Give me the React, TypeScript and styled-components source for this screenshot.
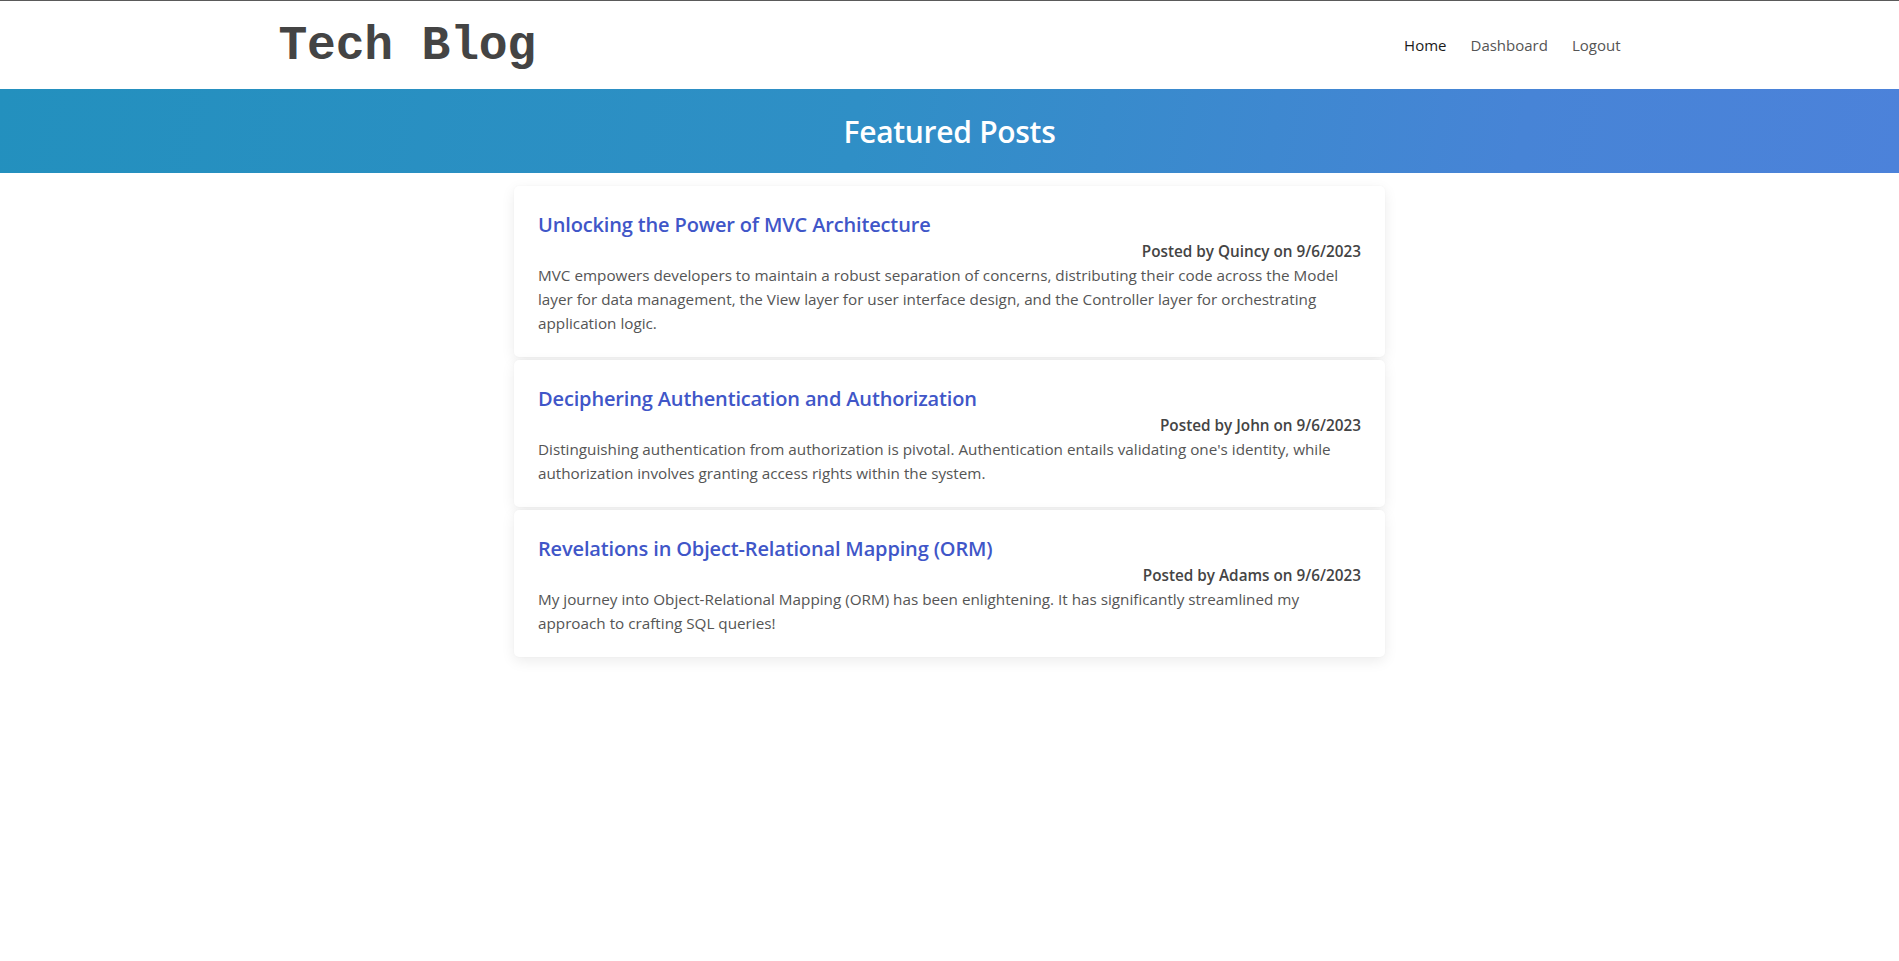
import React from "react";
import styled, { createGlobalStyle } from "styled-components";

const GlobalStyle = createGlobalStyle`
  html, body {
    margin: 0;
    padding: 0;
    background: #ffffff;
  }
  body {
    font-family: "Open Sans", "Noto Sans", Arial, sans-serif;
    color: #555555;
  }
  * { box-sizing: border-box; }
`;

const Page = styled.div`
  min-height: 961px;
  border-top: 1px solid #5a5a5a;
  background: #ffffff;
`;

const Header = styled.header`
  height: 88px;
  display: flex;
  align-items: center;
`;

const HeaderInner = styled.div`
  width: 100%;
  max-width: 1342px;
  margin: 0 auto;
  display: flex;
  align-items: center;
  justify-content: space-between;
`;

const Logo = styled.h1`
  margin: 0;
  font-family: "Liberation Mono", "Courier New", monospace;
  font-size: 48px;
  font-weight: 700;
  color: #444444;
  line-height: 1;
  letter-spacing: -0.2px;
  padding-top: 2px;
`;

const Nav = styled.nav`
  display: flex;
  align-items: center;
  gap: 24px;
`;

const NavLink = styled.a<{ $active?: boolean }>`
  font-size: 15px;
  letter-spacing: 0;
  color: ${(p) => (p.$active ? "#1a1a1a" : "#555555")};
  text-decoration: none;
  cursor: pointer;
`;

const Banner = styled.section`
  height: 84px;
  display: flex;
  align-items: center;
  justify-content: center;
  background: linear-gradient(100deg, #2390be 0%, #2f8fc6 45%, #4784d6 80%, #4c82da 100%);
`;

const BannerTitle = styled.h2`
  margin: 0;
  font-size: 30px;
  font-weight: 600;
  color: #ffffff;
  letter-spacing: -0.3px;
  padding-top: 1px;
`;

const Main = styled.main`
  width: 871px;
  margin: 13px auto 0;
  display: flex;
  flex-direction: column;
  gap: 3px;
`;

const Card = styled.article`
  background: #ffffff;
  border-radius: 5px;
  box-shadow: 0 4px 14px rgba(0, 0, 0, 0.08), 0 0 2px rgba(0, 0, 0, 0.04);
  padding: 27px 24px 22px;
`;

const CardTitle = styled.h3`
  margin: 0 0 2px;
  font-size: 20px;
  line-height: 24px;
  font-weight: 600;
  color: #4056c8;
  letter-spacing: -0.15px;
`;

const Meta = styled.div`
  text-align: right;
  font-size: 15.3px;
  line-height: 24px;
  font-weight: 600;
  color: #444444;
`;

const Body = styled.p`
  margin: 0;
  font-size: 15.25px;
  line-height: 24px;
  color: #555555;
`;

const posts = [
  {
    title: "Unlocking the Power of MVC Architecture",
    author: "Quincy",
    date: "9/6/2023",
    body:
      "MVC empowers developers to maintain a robust separation of concerns, distributing their code across the Model layer for data management, the View layer for user interface design, and the Controller layer for orchestrating application logic.",
  },
  {
    title: "Deciphering Authentication and Authorization",
    author: "John",
    date: "9/6/2023",
    body:
      "Distinguishing authentication from authorization is pivotal. Authentication entails validating one's identity, while authorization involves granting access rights within the system.",
  },
  {
    title: "Revelations in Object-Relational Mapping (ORM)",
    author: "Adams",
    date: "9/6/2023",
    body:
      "My journey into Object-Relational Mapping (ORM) has been enlightening. It has significantly streamlined my approach to crafting SQL queries!",
  },
];

export default function App() {
  return (
    <>
      <GlobalStyle />
      <Page>
        <Header>
          <HeaderInner>
            <Logo>Tech Blog</Logo>
            <Nav>
              <NavLink $active>Home</NavLink>
              <NavLink>Dashboard</NavLink>
              <NavLink>Logout</NavLink>
            </Nav>
          </HeaderInner>
        </Header>
        <Banner>
          <BannerTitle>Featured Posts</BannerTitle>
        </Banner>
        <Main>
          {posts.map((p) => (
            <Card key={p.title}>
              <CardTitle>{p.title}</CardTitle>
              <Meta>
                Posted by {p.author} on {p.date}
              </Meta>
              <Body>{p.body}</Body>
            </Card>
          ))}
        </Main>
      </Page>
    </>
  );
}
